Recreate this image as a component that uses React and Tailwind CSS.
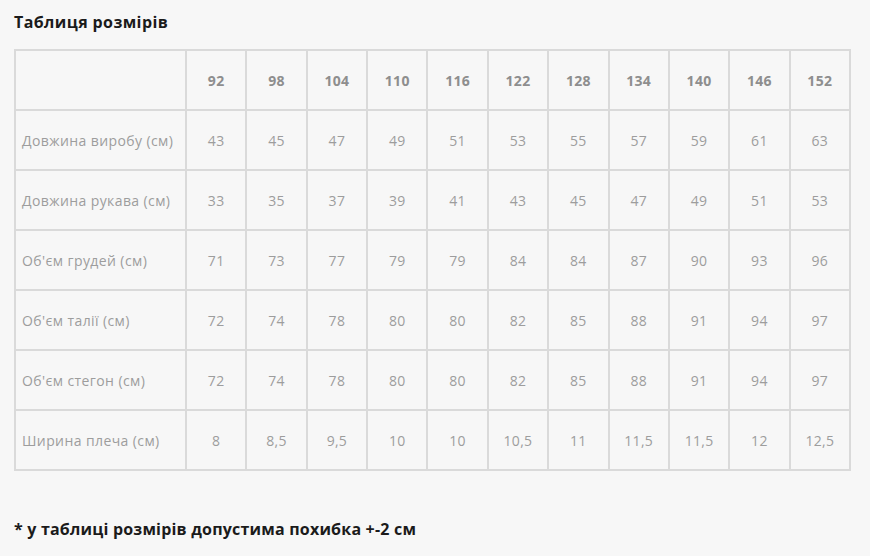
import React from "react";

const sizes = ["92", "98", "104", "110", "116", "122", "128", "134", "140", "146", "152"];
const rows = [
  ["Довжина виробу (см)", ["43", "45", "47", "49", "51", "53", "55", "57", "59", "61", "63"]],
  ["Довжина рукава (см)", ["33", "35", "37", "39", "41", "43", "45", "47", "49", "51", "53"]],
  ["Об'єм грудей (см)", ["71", "73", "77", "79", "79", "84", "84", "87", "90", "93", "96"]],
  ["Об'єм талії (см)", ["72", "74", "78", "80", "80", "82", "85", "88", "91", "94", "97"]],
  ["Об'єм стегон (см)", ["72", "74", "78", "80", "80", "82", "85", "88", "91", "94", "97"]],
  ["Ширина плеча (см)", ["8", "8,5", "9,5", "10", "10", "10,5", "11", "11,5", "11,5", "12", "12,5"]],
];

export default function App() {
  return (
    <div
      className="w-[870px] h-[556px] bg-[#f7f7f7] pl-[14px] pt-[11px] overflow-hidden"
      style={{ fontFamily: '"Open Sans", "Noto Sans", sans-serif' }}
    >
      <h1 className="text-[16px] leading-[22px] font-bold text-[#1b1b1b] tracking-[0.4px]">Таблиця розмірів</h1>
      <table className="mt-[16px] w-[837px] table-fixed border-collapse border-2 border-[#d2d2d2]">
        <colgroup>
          <col className="w-[171px]" />
          {sizes.map((s) => (
            <col key={s} />
          ))}
        </colgroup>
        <thead>
          <tr className="h-[60px]">
            <th className="border-2 border-[#dadada]"></th>
            {sizes.map((s) => (
              <th
                key={s}
                className="border-2 border-[#dadada] text-center text-[14px] font-bold text-[#8e8e8e] tracking-[0.3px]"
              >
                {s}
              </th>
            ))}
          </tr>
        </thead>
        <tbody>
          {rows.map(([label, vals]) => (
            <tr key={label} className="h-[60px]">
              <td className="border-2 border-[#dadada] pl-[6px] text-left text-[14px] text-[#9d9d9d] whitespace-nowrap tracking-[0.4px]">
                {label}
              </td>
              {vals.map((v, i) => (
                <td
                  key={i}
                  className="border-2 border-[#dadada] text-center text-[14px] text-[#9d9d9d] tracking-[0.3px]"
                >
                  {v}
                </td>
              ))}
            </tr>
          ))}
        </tbody>
      </table>
      <p className="mt-[47px] text-[16px] leading-[22px] font-bold text-[#1b1b1b] tracking-[0.2px]">
        * у таблиці розмірів допустима похибка +-2 см
      </p>
    </div>
  );
}
